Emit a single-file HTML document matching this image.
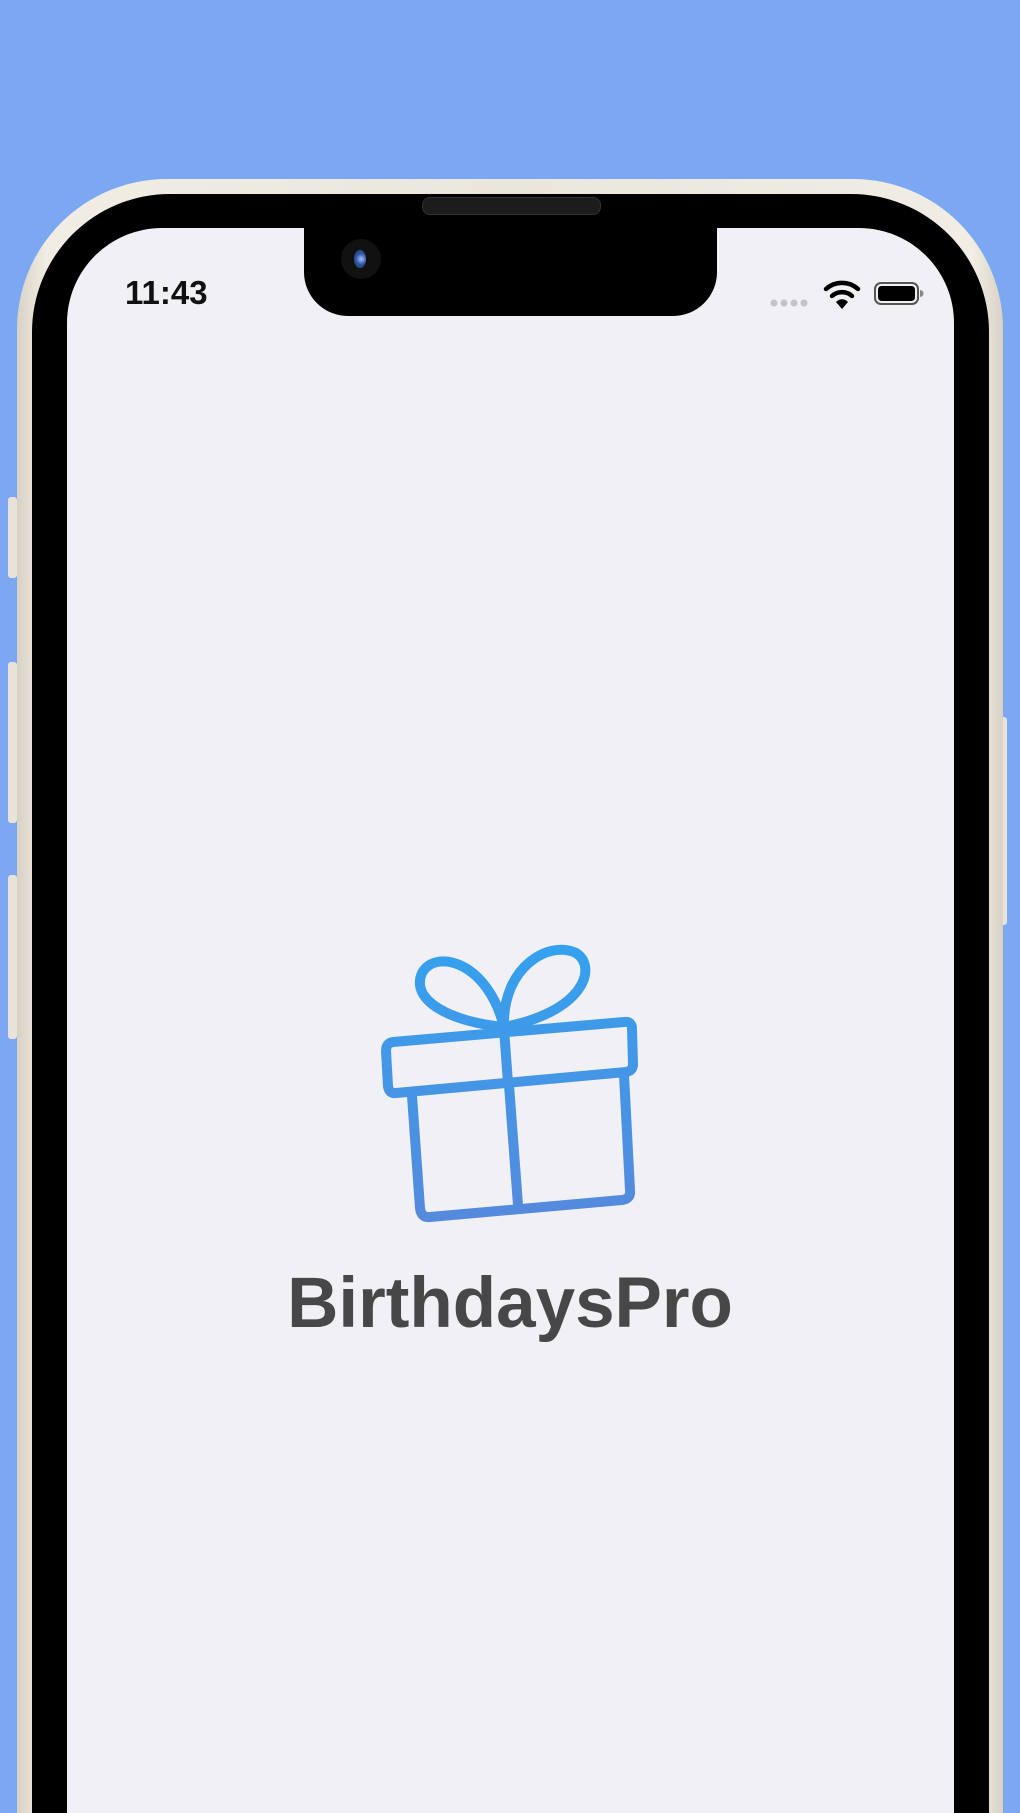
<!DOCTYPE html>
<html><head><meta charset="utf-8"><style>
html,body{margin:0;padding:0;width:1020px;height:1813px;overflow:hidden}
body{background:#7ba7f3;position:relative;font-family:"Liberation Sans",sans-serif}
.frame{position:absolute;left:17px;top:179px;width:986px;height:1634px;border-radius:150px 150px 0 0;background:linear-gradient(90deg,#d8d2c4,#f1ede4 3%,#ebe6dc 50%,#f1ede4 97%,#d8d2c4)}
.bezel{position:absolute;left:32px;top:194px;width:957px;height:1619px;border-radius:138px 138px 0 0;background:#000}
.screen{position:absolute;left:67px;top:228px;width:887px;height:1585px;border-radius:95px 95px 0 0;background:#f0f0f5}
.notch{position:absolute;left:304px;top:220px;width:413px;height:96px;background:#000;border-radius:0 0 44px 44px}
.spk{position:absolute;left:422px;top:197px;width:177px;height:16px;border-radius:8px;background:#1c1c1c;border:1px solid #333}
.cam{position:absolute;left:341px;top:239px;width:40px;height:40px;border-radius:50%;background:#111}
.cam:after{content:"";position:absolute;left:13px;top:11px;width:12px;height:18px;border-radius:50%;background:radial-gradient(circle at 60% 50%,#a8c0ff,#2d4ea0 50%,#1b5a5a)}
.time{position:absolute;left:125px;top:274px;font-size:33px;font-weight:bold;color:#111}
.btn{position:absolute;background:#e8e3d8;border-radius:3px}
.title{position:absolute;left:0;width:1020px;top:1263px;text-align:center;font-size:71px;font-weight:bold;color:#474749;letter-spacing:0}
</style></head><body>
<div class="btn" style="left:8px;top:497px;width:9px;height:81px"></div>
<div class="btn" style="left:8px;top:662px;width:9px;height:161px"></div>
<div class="btn" style="left:8px;top:875px;width:9px;height:164px"></div>
<div class="btn" style="left:1000px;top:717px;width:7px;height:208px"></div>
<div class="frame"></div>
<div class="bezel"></div>
<div class="screen"></div>
<div class="notch"></div>
<div class="spk"></div>
<div class="cam"></div>
<div class="time">11:43</div>
<svg style="position:absolute;left:0;top:0" width="1020" height="400">
<g fill="#c4c4c8"><circle cx="774" cy="303" r="3.5"/><circle cx="784" cy="303" r="3.5"/><circle cx="794" cy="303" r="3.5"/><circle cx="804" cy="303" r="3.5"/></g>
<g fill="none" stroke="#000" stroke-width="4.5" stroke-linecap="round">
<path d="M826,289 A24,24 0 0 1 858,289"/><path d="M832,296 A15,15 0 0 1 852,296"/></g>
<path d="M836,302 L842,309 L848,302 A8,8 0 0 0 836,302Z" fill="#000"/>
<rect x="875" y="283" width="43" height="21" rx="6" fill="none" stroke="#555" stroke-width="2"/>
<rect x="878" y="286" width="37" height="15" rx="3.5" fill="#000"/>
<path d="M920,290 a3,3 0 0 1 0,7z" fill="#888"/>
</svg>
<svg style="position:absolute;left:0;top:0" width="1020" height="1400">
<defs><linearGradient id="g" x1="0" y1="940" x2="0" y2="1225" gradientUnits="userSpaceOnUse"><stop offset="0" stop-color="#33a2ef"/><stop offset="1" stop-color="#5689dc"/></linearGradient></defs>
<g fill="none" stroke="url(#g)" stroke-width="10" stroke-linejoin="round" stroke-linecap="round">
<path d="M393,1042 L624,1022 Q632,1021 632,1029 L633,1064 Q633,1071 626,1072 L396,1093 Q389,1094 388,1086 L386,1051 Q386,1043 393,1042Z"/>
<path d="M412,1096 L420,1208 Q421,1218 430,1217 L622,1200 Q631,1199 630,1190 L624,1075"/>
<path d="M504,1029 L508,1083 M509,1085 L518,1205"/>
<path d="M504,1027 C488,962 436,948 422,973 C410,1000 450,1022 504,1027Z"/>
<path d="M504,1027 C502,966 550,940 576,953 C598,967 584,1012 504,1027Z"/>
</g></svg>
<div class="title">BirthdaysPro</div>
</body></html>
